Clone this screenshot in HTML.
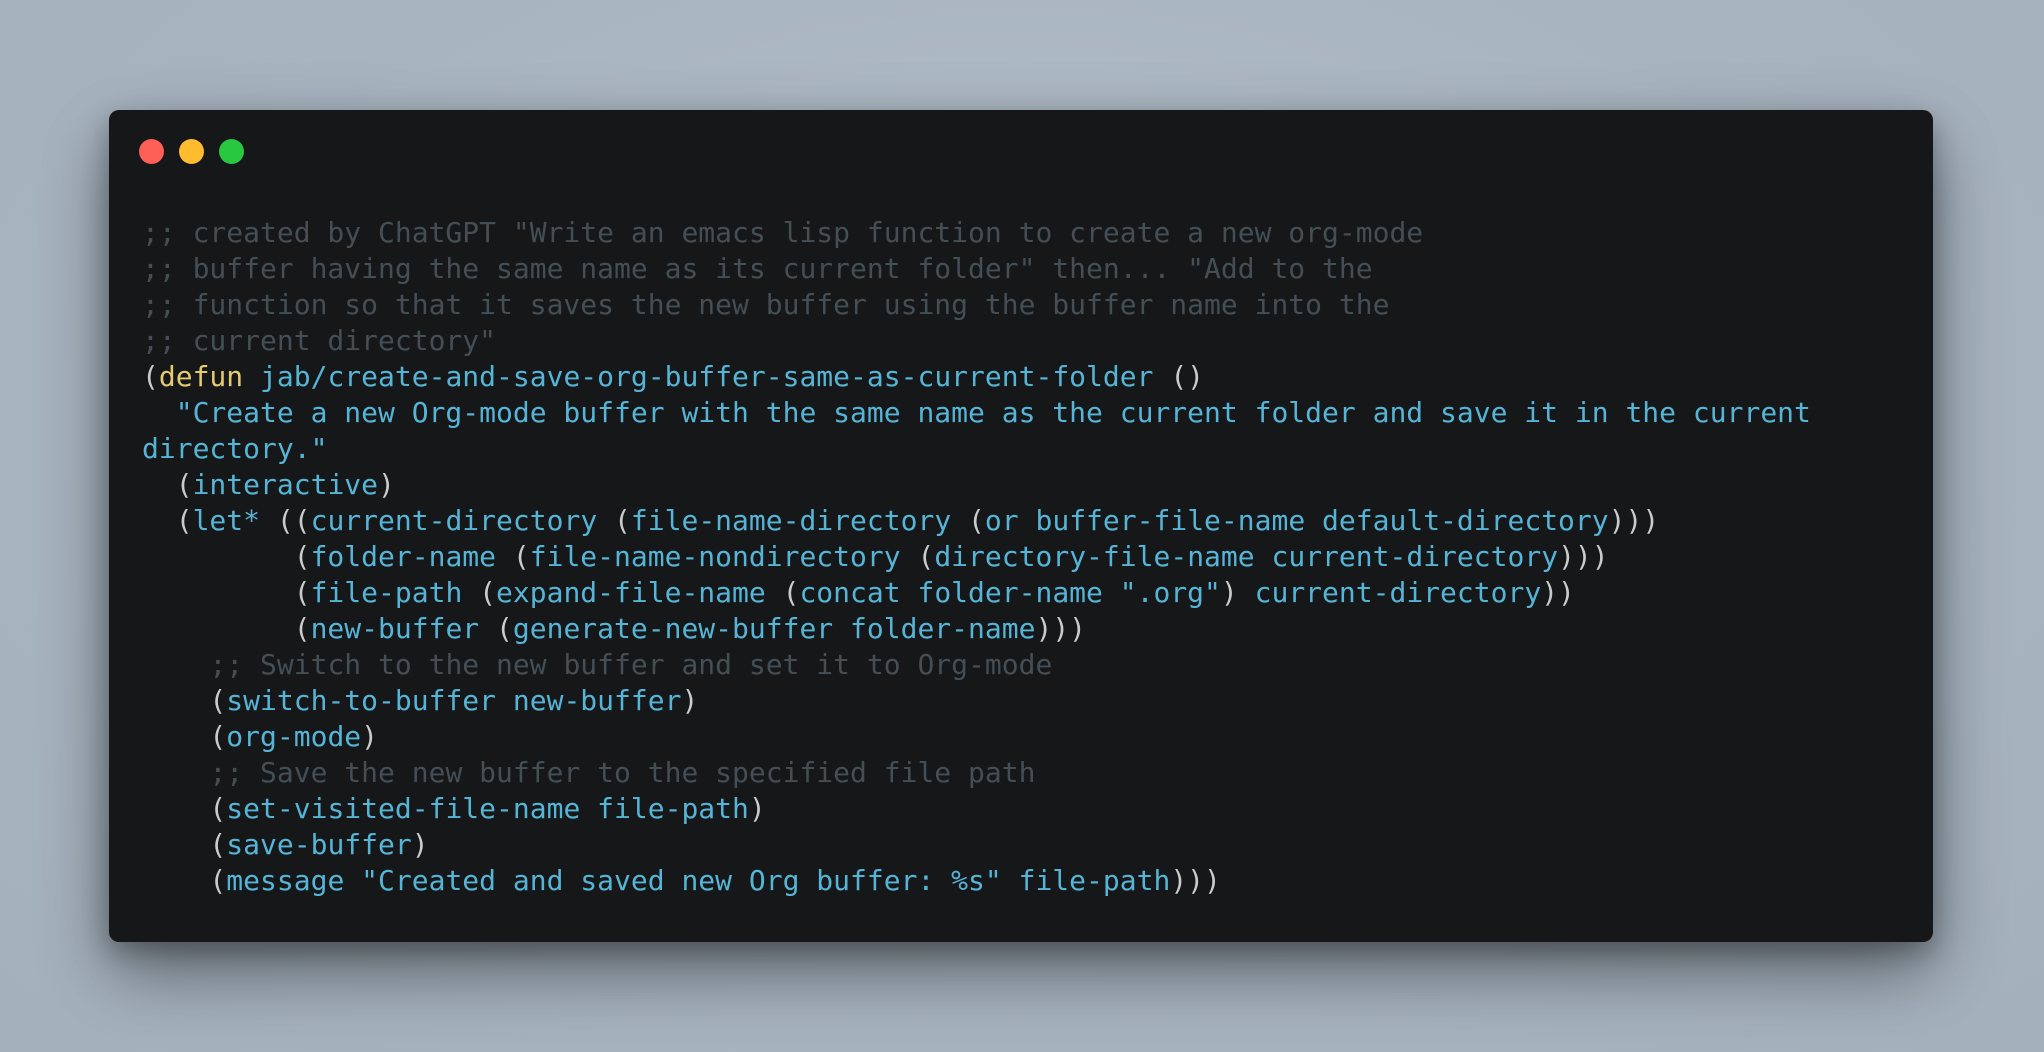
<!DOCTYPE html>
<html><head><meta charset="utf-8"><style>
html,body{margin:0;padding:0}
body{width:2044px;height:1052px;background:radial-gradient(ellipse at 50% 40%,#b4bfca 0%,#a8b4c0 60%,#a4b0bc 100%);position:relative;overflow:hidden}
.win{position:absolute;left:109px;top:110px;width:1824px;height:832px;background:#161719;border-radius:10px;box-shadow:0 30px 70px rgba(0,0,0,0.45),0 10px 25px rgba(0,0,0,0.25)}
.dot{position:absolute;top:139px;width:25px;height:25px;border-radius:50%}
pre{position:absolute;left:142px;top:215px;margin:0;font-family:"DejaVu Sans Mono","Liberation Mono",monospace;font-size:28px;line-height:36px;color:#c9cbcd}
.c{color:#444e55}.k{color:#e5cb70}.b{color:#56b4d6}.p{color:#c9cbcd}
</style></head><body>
<div class="win"></div>
<div class="dot" style="left:139px;background:#fe5f57"></div>
<div class="dot" style="left:179px;background:#febc2e"></div>
<div class="dot" style="left:219px;background:#28c840"></div>
<pre><span class="c">;; created by ChatGPT "Write an emacs lisp function to create a new org-mode
;; buffer having the same name as its current folder" then... "Add to the
;; function so that it saves the new buffer using the buffer name into the
;; current directory"</span>
(<span class="k">defun</span> <span class="b">jab/create-and-save-org-buffer-same-as-current-folder</span> ()
<span class="b">  "Create a new Org-mode buffer with the same name as the current folder and save it in the current
directory."</span>
  (<span class="b">interactive</span>)
  (<span class="b">let*</span> ((<span class="b">current-directory</span> (<span class="b">file-name-directory</span> (<span class="b">or buffer-file-name default-directory</span>)))
         (<span class="b">folder-name</span> (<span class="b">file-name-nondirectory</span> (<span class="b">directory-file-name current-directory</span>)))
         (<span class="b">file-path</span> (<span class="b">expand-file-name</span> (<span class="b">concat folder-name ".org"</span>) <span class="b">current-directory</span>))
         (<span class="b">new-buffer</span> (<span class="b">generate-new-buffer folder-name</span>)))
    <span class="c">;; Switch to the new buffer and set it to Org-mode</span>
    (<span class="b">switch-to-buffer new-buffer</span>)
    (<span class="b">org-mode</span>)
    <span class="c">;; Save the new buffer to the specified file path</span>
    (<span class="b">set-visited-file-name file-path</span>)
    (<span class="b">save-buffer</span>)
    (<span class="b">message "Created and saved new Org buffer: %s" file-path</span>)))</pre>
</body></html>
